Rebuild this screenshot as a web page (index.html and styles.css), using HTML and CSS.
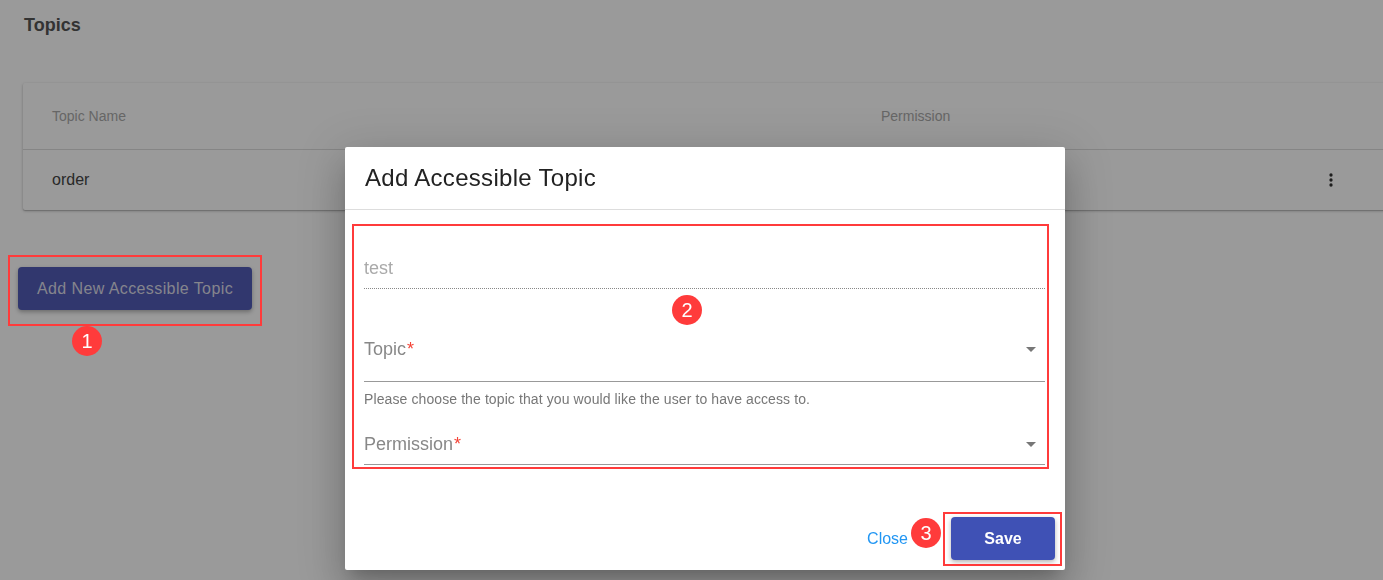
FILE: index.html
```html
<!DOCTYPE html>
<html lang="en">
<head>
    <meta charset="UTF-8">
    <title>Topics</title>
    <link rel="stylesheet" href="styles.css">
</head>
<body>
    <div class="page">
        <h2 class="page-title">Topics</h2>
        <div class="card">
            <div class="table-row table-head">
                <div class="col-name">Topic Name</div>
                <div class="col-perm">Permission</div>
            </div>
            <div class="table-row">
                <div class="col-name">order</div>
                <div class="col-perm"></div>
                <svg class="more" viewBox="0 0 24 24" width="20" height="20"><circle cx="12" cy="6" r="2"/><circle cx="12" cy="12" r="2"/><circle cx="12" cy="18" r="2"/></svg>
            </div>
        </div>
        <button class="add-btn">Add New Accessible Topic</button>
    </div>

    <div class="overlay"></div>

    <!-- step markers over the backdrop -->
    <div class="mark mark-1"></div>
    <div class="badge badge-1">1</div>

    <div class="dialog">
        <div class="dialog-title">Add Accessible Topic</div>
        <div class="dialog-body">
            <div class="field field-input">test</div>
            <div class="field field-select field-topic">
                <span class="label">Topic<span class="req">*</span></span>
                <span class="arrow"></span>
            </div>
            <div class="helper">Please choose the topic that you would like the user to have access to.</div>
            <div class="field field-select field-perm">
                <span class="label">Permission<span class="req">*</span></span>
                <span class="arrow"></span>
            </div>
        </div>
        <div class="dialog-actions">
            <a class="close-link">Close</a>
            <button class="save-btn">Save</button>
        </div>

        <div class="mark mark-2"></div>
        <div class="badge badge-2">2</div>
        <div class="mark mark-3"></div>
        <div class="badge badge-3">3</div>
    </div>
</body>
</html>
```

FILE: styles.css
```css
body { margin: 0; font-family: "Liberation Sans", Arial, sans-serif; background: #fff; overflow: hidden; height: 580px; }
.page { padding: 14px 0 0 18px; }
.page-title { margin: 0 0 47px 6px; font-size: 18px; line-height: 22px; font-weight: bold; color: #555; }

.card { margin-left: 5px; width: 1400px; background: #fff; border-radius: 2px; box-shadow: 0 1px 3px rgba(0,0,0,0.25), 0 1px 1px rgba(0,0,0,0.14); }
.table-row { display: flex; align-items: center; height: 60px; padding-left: 29px; position: relative; font-size: 16px; color: #454545; }
.table-head { height: 66px; border-bottom: 1px solid #dcdcdc; font-size: 14px; color: #aaa; }
.col-name { width: 829px; }
.more { position: absolute; left: 1298px; top: 20px; fill: #333; }

.add-btn { margin-top: 57px; height: 43px; padding: 0 19px; background: #515bb7; color: #dcdce8; font-family: inherit; font-size: 16px; letter-spacing: 0.4px; border: none; border-radius: 4px; box-shadow: 0 2px 4px rgba(0,0,0,0.3); }

.overlay { position: fixed; top: 0; left: 0; right: 0; bottom: 0; background: rgba(0,0,0,0.395); }

.dialog { position: absolute; left: 345px; top: 147px; width: 720px; height: 423px; background: #fff; border-radius: 2px; display: flex; flex-direction: column; box-shadow: 0 11px 15px -7px rgba(0,0,0,0.2), 0 24px 38px 3px rgba(0,0,0,0.14), 0 9px 46px 8px rgba(0,0,0,0.12); }
.dialog-title { height: 62px; line-height: 62px; padding-left: 20px; font-size: 24px; color: #222; letter-spacing: 0.3px; border-bottom: 1px solid #ddd; }
.dialog-body { padding: 47px 20px 0 19px; }
.field { font-size: 18px; line-height: 22px; color: #888; position: relative; }
.field-input { color: #aaa; padding-bottom: 9px; border-bottom: 1px dotted #888; }
.field-select { border-bottom: 1px solid #999; }
.field-topic { margin-top: 49px; padding-bottom: 21px; }
.field-perm { margin-top: 26px; padding-bottom: 9px; }
.req { color: #f44336; margin-left: 1px; }
.arrow { position: absolute; right: 9px; top: 9px; width: 0; height: 0; border-left: 5px solid transparent; border-right: 5px solid transparent; border-top: 5px solid #777; }
.helper { margin-top: 9px; font-size: 14px; line-height: 16px; letter-spacing: 0.1px; color: #777; }

.dialog-actions { margin-top: auto; display: flex; justify-content: flex-end; align-items: center; padding: 0 10px 10px; }
.close-link { font-size: 16px; color: #2196f3; margin-right: 43px; margin-top: 1px; }
.save-btn { width: 104px; height: 43px; background: #3f51b5; color: #fff; font-family: inherit; font-size: 16px; font-weight: bold; border: none; border-radius: 4px; box-shadow: 0 2px 5px rgba(0,0,0,0.3); }

.mark { position: absolute; border: 2px solid #ff3b3b; box-sizing: border-box; }
.badge { position: absolute; width: 30px; height: 30px; border-radius: 50%; background: #ff3b3b; color: #fff; font-size: 20px; line-height: 30px; text-align: center; }
.mark-1 { left: 8px; top: 255px; width: 254px; height: 71px; }
.badge-1 { left: 72px; top: 326px; }
.mark-2 { left: 7px; top: 77px; width: 697px; height: 245px; }
.badge-2 { left: 327px; top: 148px; }
.mark-3 { left: 598px; top: 365px; width: 119px; height: 54px; }
.badge-3 { left: 566px; top: 371px; }
```
